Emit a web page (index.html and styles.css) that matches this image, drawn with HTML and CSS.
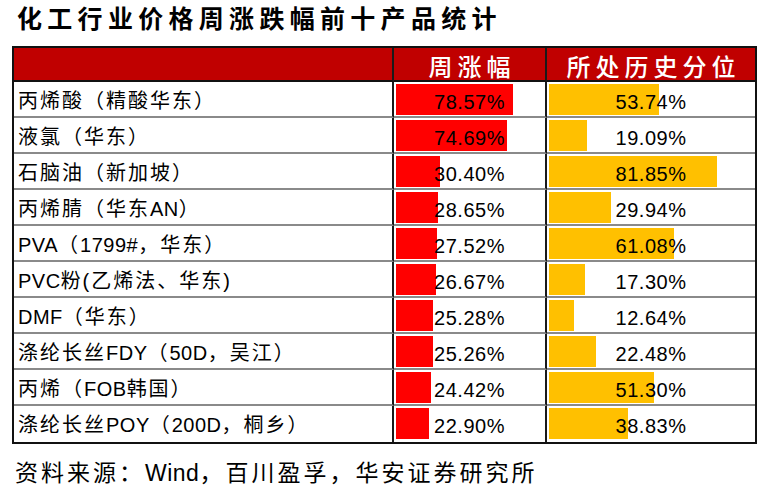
FILE: index.html
```html
<!DOCTYPE html>
<html lang="zh">
<head>
<meta charset="utf-8">
<link rel="stylesheet" href="styles.css">
</head>
<body>
<div class="page">
  <h1 class="title">化工行业价格周涨跌幅前十产品统计</h1>
  <div class="table">
    <div class="cell head first"></div>
    <div class="cell head">周涨幅</div>
    <div class="cell head last">所处历史分位</div>

    <div class="cell name">丙烯酸（精酸华东）</div>
    <div class="cell num"><span class="bar red" style="width:117px"></span><span class="val">78.57%</span></div>
    <div class="cell num last"><span class="bar gold" style="width:110px"></span><span class="val">53.74%</span></div>

    <div class="cell name">液氯（华东）</div>
    <div class="cell num"><span class="bar red" style="width:111px"></span><span class="val">74.69%</span></div>
    <div class="cell num last"><span class="bar gold" style="width:38px"></span><span class="val">19.09%</span></div>

    <div class="cell name">石脑油（新加坡）</div>
    <div class="cell num"><span class="bar red" style="width:44px"></span><span class="val">30.40%</span></div>
    <div class="cell num last"><span class="bar gold" style="width:168px"></span><span class="val">81.85%</span></div>

    <div class="cell name">丙烯腈（华东<span class="lat">AN</span>）</div>
    <div class="cell num"><span class="bar red" style="width:42px"></span><span class="val">28.65%</span></div>
    <div class="cell num last"><span class="bar gold" style="width:62px"></span><span class="val">29.94%</span></div>

    <div class="cell name"><span class="lat">PVA</span>（<span class="lat">1799#</span>，华东）</div>
    <div class="cell num"><span class="bar red" style="width:41px"></span><span class="val">27.52%</span></div>
    <div class="cell num last"><span class="bar gold" style="width:125px"></span><span class="val">61.08%</span></div>

    <div class="cell name"><span class="lat">PVC</span>粉(乙烯法、华东)</div>
    <div class="cell num"><span class="bar red" style="width:40px"></span><span class="val">26.67%</span></div>
    <div class="cell num last"><span class="bar gold" style="width:36px"></span><span class="val">17.30%</span></div>

    <div class="cell name"><span class="lat">DMF</span>（华东）</div>
    <div class="cell num"><span class="bar red" style="width:37px"></span><span class="val">25.28%</span></div>
    <div class="cell num last"><span class="bar gold" style="width:25px"></span><span class="val">12.64%</span></div>

    <div class="cell name">涤纶长丝<span class="lat">FDY</span>（<span class="lat">50D</span>，吴江）</div>
    <div class="cell num"><span class="bar red" style="width:37px"></span><span class="val">25.26%</span></div>
    <div class="cell num last"><span class="bar gold" style="width:47px"></span><span class="val">22.48%</span></div>

    <div class="cell name">丙烯（<span class="lat">FOB</span>韩国）</div>
    <div class="cell num"><span class="bar red" style="width:35px"></span><span class="val">24.42%</span></div>
    <div class="cell num last"><span class="bar gold" style="width:105px"></span><span class="val">51.30%</span></div>

    <div class="cell name lastrow">涤纶长丝<span class="lat">POY</span>（<span class="lat">200D</span>，桐乡）</div>
    <div class="cell num lastrow"><span class="bar red" style="width:33px"></span><span class="val">22.90%</span></div>
    <div class="cell num last lastrow"><span class="bar gold" style="width:79px"></span><span class="val">38.83%</span></div>
  </div>
  <p class="source">资料来源：<span class="lat">Wind</span>，百川盈孚，华安证券研究所</p>
</div>
</body>
</html>
```

FILE: styles.css
```css
html, body {
  margin: 0;
  padding: 0;
  background: #ffffff;
}

.page {
  width: 759px;
  height: 496px;
  overflow: hidden;
  font-family: "Noto Sans CJK SC", sans-serif;
  color: #000;
}

.title {
  margin: 0 0 12px 17px;
  font-size: 25px;
  line-height: 34px;
  font-weight: 700;
  letter-spacing: 5.3px;
}

.table {
  margin-left: 12px;
  width: 745px;
  box-sizing: border-box;
  border: 2px solid #111;
  display: grid;
  grid-template-columns: 380px 153px 208px;
  grid-auto-rows: 36px;
  grid-template-rows: 34px;
}

.cell {
  box-sizing: border-box;
  border-right: 2px solid #1a1a1a;
  border-bottom: 2px solid #8a8a8a;
  position: relative;
}

.cell.last {
  border-right: none;
}

.cell.lastrow {
  border-bottom: none;
}

.head {
  background: #c00000;
  color: #fff;
  border-bottom: 2px solid #111;
  font-size: 24px;
  letter-spacing: 5px;
  text-indent: 5px;
  text-align: center;
  line-height: 36px;
  font-weight: 500;
}

.name {
  font-family: "Liberation Sans", "Noto Sans CJK SC", sans-serif;
  font-size: 20px;
  letter-spacing: 2px;
  line-height: 38px;
  padding-left: 4px;
  white-space: nowrap;
}

.lat {
  letter-spacing: 0.5px;
  font-family: "Liberation Sans", sans-serif;
}

.num {
  text-align: center;
  font-family: "Liberation Sans", sans-serif;
  font-size: 20px;
  line-height: 40px;
}

.bar {
  position: absolute;
  left: 2px;
  top: 2px;
  height: 31px;
}

.bar.red {
  background: #ff0000;
}

.bar.gold {
  background: #ffc000;
}

.val {
  position: relative;
  letter-spacing: 0.5px;
}

.source {
  margin: 12px 0 0 15px;
  font-size: 23px;
  line-height: 30px;
  letter-spacing: 3px;
}
```
